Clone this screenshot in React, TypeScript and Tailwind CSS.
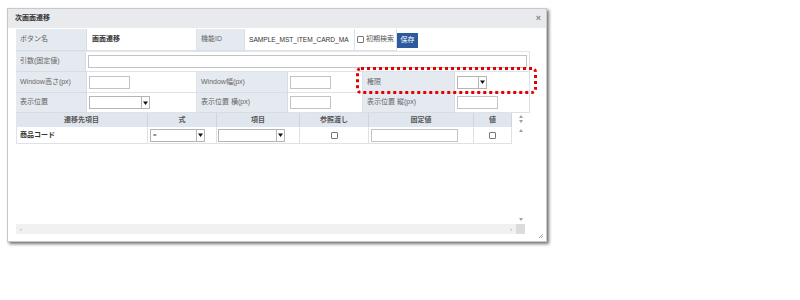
import React from "react";

const Arrow = () => (
  <svg width="5" height="4" viewBox="0 0 5 4">
    <path d="M0 0.5h5L2.5 4z" fill="#111" />
  </svg>
);

const Select = ({ w, value }: { w: string; value?: string }) => (
  <div className={`flex h-[13px] border border-[#b5b5b5] bg-white ${w}`}>
    <span className="flex-1 px-[2px] text-[6px] leading-[11px] text-[#333]">{value}</span>
    <span className="flex w-[8px] items-center justify-center border-l border-[#b5b5b5]">
      <Arrow />
    </span>
  </div>
);

const Input = ({ w }: { w: string }) => <div className={`h-[13px] border border-[#c3c3c3] bg-white ${w}`} />;

const Check = () => <div className="h-[7px] w-[7px] rounded-[1px] border border-[#777] bg-white" />;

const Label = ({ w, children }: { w: string; children: React.ReactNode }) => (
  <div className={`flex items-center border-b border-r border-[#d7dde5] bg-[#e5eaf0] px-[4px] text-[#666] ${w}`}>{children}</div>
);

const Cell = ({ w, children }: { w: string; children?: React.ReactNode }) => (
  <div className={`flex items-center border-b border-r border-[#dde2e8] bg-white px-[2px] ${w}`}>{children}</div>
);

const Tri = ({ up }: { up?: boolean }) => (
  <svg width="4" height="3" viewBox="0 0 4 3">
    <path d={up ? "M0 3h4L2 0z" : "M0 0h4L2 3z"} fill="#a0a0a0" />
  </svg>
);

const cols = [
  { name: "遷移先項目", w: "w-[132px]" },
  { name: "式", w: "w-[69px]" },
  { name: "項目", w: "w-[83px]" },
  { name: "参照渡し", w: "w-[69px]" },
  { name: "固定値", w: "w-[105px]" },
  { name: "値", w: "w-[38px]" },
];

export default function App() {
  return (
    <div className="relative h-[300px] w-[800px] bg-white font-['Liberation_Sans','Noto_Sans_CJK_JP',sans-serif] text-[7px]">
      <div className="absolute left-[7px] top-[8px] flex h-[234px] w-[540px] flex-col border border-[#c8c8c8] bg-white shadow-[2px_2px_3px_rgba(0,0,0,0.55)]">
        {/* title */}
        <div className="flex h-[19px] items-center justify-between bg-[#e8eaed] pl-[7px] pr-[5px]">
          <span className="font-bold text-[#333]">次画面遷移</span>
          <span className="text-[9px] font-bold text-[#888]">×</span>
        </div>

        <div className="mt-[1px] pl-[8px]">
          {/* form */}
          <div className="flex h-[23px] w-[514px] border-b border-[#e3e7ec]">
            <Label w="w-[71px]">ボタン名</Label>
            <Cell w="w-[110px]">
              <span className="pl-[3px] font-semibold text-[#333]">画面遷移</span>
            </Cell>
            <Label w="w-[48px]">機能ID</Label>
            <Cell w="w-[110px]">
              <span className="whitespace-nowrap pl-[2px] text-[6.6px] text-[#333]">SAMPLE_MST_ITEM_CARD_MA</span>
            </Cell>
            <Cell w="w-[42px]">
              <Check />
              <span className="ml-[2px] text-[#555]">初期検索</span>
            </Cell>
            <div className="flex items-center">
              <div className="flex h-[15px] w-[21px] items-center justify-center bg-[#2c5a9c] text-white">保存</div>
            </div>
          </div>

          <div className="flex h-[20px] w-[514px]">
            <Label w="w-[71px]">引数(固定値)</Label>
            <Cell w="flex-1">
              <Input w="w-[439px]" />
            </Cell>
          </div>

          <div className="flex h-[21px] w-[514px]">
            <Label w="w-[71px]">Window高さ(px)</Label>
            <Cell w="w-[110px]">
              <Input w="w-[41px]" />
            </Cell>
            <Label w="w-[91px]">Window幅(px)</Label>
            <Cell w="w-[75px]">
              <Input w="w-[41px]" />
            </Cell>
            <Label w="w-[92px]">権限</Label>
            <Cell w="w-[75px]">
              <Select w="w-[30px]" />
            </Cell>
          </div>

          <div className="flex h-[20px] w-[514px]">
            <Label w="w-[71px]">表示位置</Label>
            <Cell w="w-[110px]">
              <Select w="w-[61px]" />
            </Cell>
            <Label w="w-[91px]">表示位置 横(px)</Label>
            <Cell w="w-[75px]">
              <Input w="w-[41px]" />
            </Cell>
            <Label w="w-[92px]">表示位置 縦(px)</Label>
            <Cell w="w-[75px]">
              <Input w="w-[41px]" />
            </Cell>
          </div>

          {/* grid */}
          <div className="flex h-[121px] w-[509px] flex-col">
            <div className="flex flex-1">
              <div className="w-[496px]">
                <div className="flex h-[14px] bg-[#e0e6ed]">
                  {cols.map((c) => (
                    <div key={c.name} className={`flex items-center justify-center border-r border-[#cfd6df] font-semibold text-[#555] ${c.w}`}>
                      {c.name}
                    </div>
                  ))}
                </div>
                <div className="flex h-[17px] border-b border-[#dde2e8]">
                  <div className="flex w-[132px] items-center border-x border-[#dde2e8] px-[3px] font-semibold text-[#333]">商品コード</div>
                  <div className="flex w-[69px] items-center border-r border-[#dde2e8] pl-[2px]">
                    <Select w="w-[55px]" value="=" />
                  </div>
                  <div className="flex w-[83px] items-center border-r border-[#dde2e8] pl-[1px]">
                    <Select w="w-[67px]" />
                  </div>
                  <div className="flex w-[69px] items-center justify-center border-r border-[#dde2e8]">
                    <Check />
                  </div>
                  <div className="flex w-[105px] items-center border-r border-[#dde2e8] pl-[2px]">
                    <Input w="w-[87px]" />
                  </div>
                  <div className="flex w-[38px] items-center justify-center border-r border-[#dde2e8]">
                    <Check />
                  </div>
                </div>
              </div>
              <div className="flex w-[13px] flex-col items-center pl-[4px] pt-[2px]">
                <Tri up />
                <div className="mt-[2px]">
                  <Tri />
                </div>
                <div className="mt-[6px]">
                  <Tri up />
                </div>
                <div className="mt-auto mb-[3px]">
                  <Tri />
                </div>
              </div>
            </div>
            <div className="flex h-[10px]">
              <div className="flex w-[500px] items-center justify-between bg-[#f1f1f1] px-[4px] text-[6px] text-[#999]">
                <span>‹</span>
                <span>›</span>
              </div>
              <div className="w-[9px] bg-[#dcdcdc]" />
            </div>
          </div>
        </div>

        {/* resize grip */}
        <svg className="absolute bottom-[2px] right-[2px]" width="6" height="6" viewBox="0 0 6 6">
          <path d="M5 1L1 5M5 3L3 5" stroke="#999" strokeWidth="0.8" />
        </svg>
      </div>

      {/* highlight annotation */}
      <div className="absolute left-[356px] top-[67px] h-[27px] w-[181px] rounded-[5px] border-[3px] border-dotted border-[#e40000]" />
    </div>
  );
}
